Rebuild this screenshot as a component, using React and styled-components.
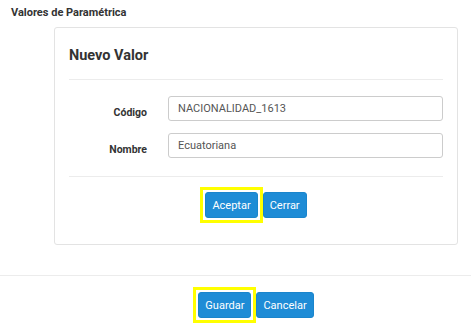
import React from 'react'
import styled, { createGlobalStyle } from 'styled-components'

const GlobalStyle = createGlobalStyle`
  body {
    margin: 0;
    background: #fff;
    font-family: 'Roboto', 'Liberation Sans', sans-serif;
  }
`

const Page = styled.div`
  width: 471px;
  height: 330px;
  overflow: hidden;
`

const PageTitle = styled.h5`
  font-family: 'Roboto', sans-serif;
  font-size: 11px;
  font-weight: 700;
  color: #333;
  line-height: 14px;
  margin: 0;
  padding: 6px 0 7px 11px;
`

const Card = styled.div`
  margin: 0 13px 0 54px;
  height: 218px;
  box-sizing: border-box;
  border: 1px solid #e3e3e3;
  border-radius: 3px;
  padding: 0 14px;
`

const CardHeader = styled.div`
  border-bottom: 1px solid #ececec;
  padding: 18px 0 13px;
`

const CardTitle = styled.h4`
  font-family: 'Roboto', sans-serif;
  font-size: 14.5px;
  font-weight: 700;
  color: #333;
  line-height: 20px;
  margin: 0;
`

const Form = styled.div`
  display: flex;
  flex-direction: column;
  gap: 12px;
  padding: 16px 0 18px;
  border-bottom: 1px solid #ececec;
`

const Row = styled.div`
  display: grid;
  grid-template-columns: 78px 1fr;
  column-gap: 21px;
`

const Label = styled.label`
  font-family: 'Roboto', sans-serif;
  font-size: 10.5px;
  font-weight: 700;
  color: #333;
  text-align: right;
  line-height: 14px;
  padding-top: 10px;
`

const Input = styled.input`
  height: 25px;
  box-sizing: border-box;
  border: 1px solid #ccc;
  border-radius: 3px;
  padding: 0 9px;
  font-family: 'Roboto', sans-serif;
  font-size: 11px;
  color: #555;
  outline: none;
`

const Actions = styled.div`
  display: flex;
  justify-content: center;
  gap: 5px;
  padding-top: 15px;
`

const Button = styled.button`
  position: relative;
  height: 26px;
  box-sizing: border-box;
  border: 1px solid #1a85cc;
  border-radius: 3px;
  background: #1e8cd6;
  color: #fff;
  font-family: 'Roboto', sans-serif;
  font-size: 11px;
  padding: 0 6px;

  &::after {
    content: '';
    display: ${p => (p.$marked ? 'block' : 'none')};
    position: absolute;
    inset: -6px;
    border: 3px solid #ffff00;
  }
`

const Divider = styled.hr`
  border: 0;
  border-top: 1px solid #ececec;
  margin: 30px 0 0;
`

const Footer = styled.div`
  margin: 0 13px 0 54px;
  display: flex;
  justify-content: center;
  gap: 5px;
  padding-top: 16px;
`

const App = () => {
  return (
    <>
      <GlobalStyle />
      <Page>
        <PageTitle>Valores de Paramétrica</PageTitle>
        <Card>
          <CardHeader>
            <CardTitle>Nuevo Valor</CardTitle>
          </CardHeader>
          <Form>
            <Row>
              <Label>Código</Label>
              <Input defaultValue="NACIONALIDAD_1613" />
            </Row>
            <Row>
              <Label>Nombre</Label>
              <Input defaultValue="Ecuatoriana" />
            </Row>
          </Form>
          <Actions>
            <Button $marked>Aceptar</Button>
            <Button>Cerrar</Button>
          </Actions>
        </Card>
        <Divider />
        <Footer>
          <Button $marked>Guardar</Button>
          <Button>Cancelar</Button>
        </Footer>
      </Page>
    </>
  )
}

export default App
